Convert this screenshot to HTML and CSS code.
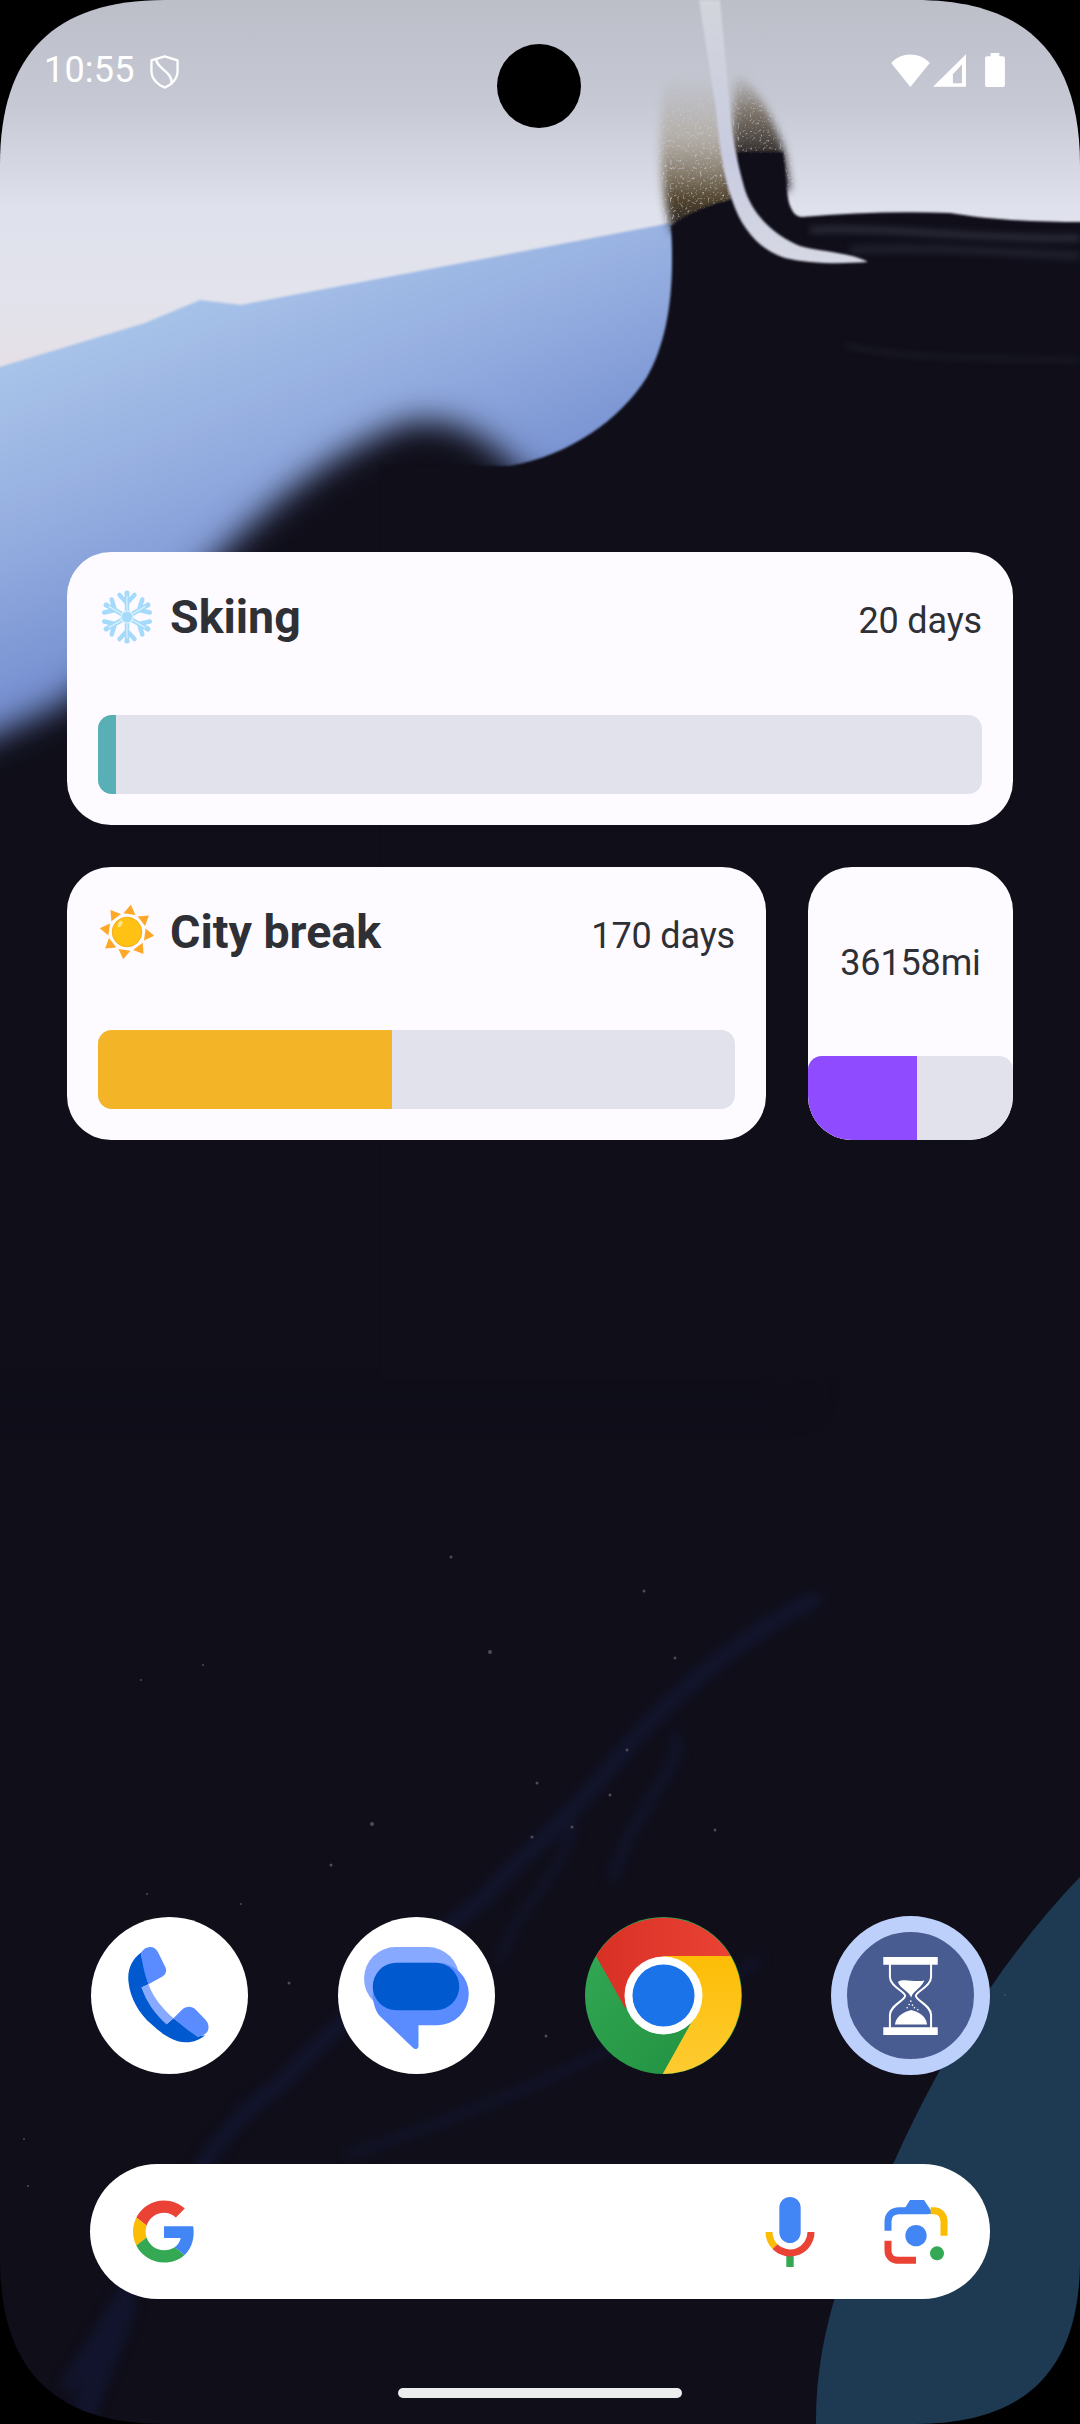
FILE: index.html
```html
<!DOCTYPE html>
<html lang="en">
<head>
<meta charset="utf-8">
<title>Home screen</title>
<link rel="stylesheet" href="styles.css">
</head>
<body>
<main class="screen">
  <svg class="wallpaper" viewBox="0 0 1080 2424" aria-hidden="true">
    <defs>
      <linearGradient id="sky" gradientUnits="userSpaceOnUse" x1="0" y1="0" x2="0" y2="380">
        <stop offset="0" stop-color="#bcbfc8"/>
        <stop offset=".27" stop-color="#c6c9d4"/>
        <stop offset=".55" stop-color="#dfe1ec"/>
        <stop offset=".78" stop-color="#e2e3ec"/>
        <stop offset="1" stop-color="#e6dfe5"/>
      </linearGradient>
      <linearGradient id="blue" gradientUnits="userSpaceOnUse" x1="300" y1="250" x2="420" y2="540">
        <stop offset="0" stop-color="#a8c3e9"/>
        <stop offset=".5" stop-color="#94ade0"/>
        <stop offset="1" stop-color="#7690d1"/>
      </linearGradient>
      <linearGradient id="brown" x1="0" y1="0" x2="0" y2="1">
        <stop offset="0" stop-color="#a09480" stop-opacity="0"/>
        <stop offset=".4" stop-color="#9a8e78" stop-opacity=".55"/>
        <stop offset=".75" stop-color="#54462f"/>
        <stop offset="1" stop-color="#14131a"/>
      </linearGradient>
      <linearGradient id="brownDark" x1="0" y1="0" x2="0" y2="1">
        <stop offset="0" stop-color="#6a5a42" stop-opacity="0"/>
        <stop offset=".35" stop-color="#5a4c38" stop-opacity=".7"/>
        <stop offset=".75" stop-color="#221e20"/>
        <stop offset="1" stop-color="#0f0e19"/>
      </linearGradient>
      <linearGradient id="strip" x1="0" y1="0" x2="0" y2="1">
        <stop offset="0" stop-color="#d3d5dc"/>
        <stop offset=".6" stop-color="#c9cce0"/>
        <stop offset="1" stop-color="#d6d8e4"/>
      </linearGradient>
      <filter id="soft" color-interpolation-filters="sRGB" filterUnits="userSpaceOnUse" x="-100" y="300" width="1000" height="1200"><feGaussianBlur stdDeviation="16"/></filter>
      <filter id="edge" color-interpolation-filters="sRGB" filterUnits="userSpaceOnUse" x="-40" y="-20" width="1160" height="1400"><feGaussianBlur stdDeviation="1"/></filter>
      <filter id="haze" color-interpolation-filters="sRGB" filterUnits="userSpaceOnUse" x="-20" y="-20" width="1120" height="2464"><feGaussianBlur stdDeviation="6"/></filter>
      <filter id="hazeThin" color-interpolation-filters="sRGB" filterUnits="userSpaceOnUse" x="-20" y="-20" width="1120" height="2464"><feGaussianBlur stdDeviation="3"/></filter>
      <filter id="grain" color-interpolation-filters="sRGB" filterUnits="userSpaceOnUse" x="620" y="40" width="220" height="220">
        <feGaussianBlur in="SourceGraphic" stdDeviation="4" result="b"/>
        <feTurbulence type="fractalNoise" baseFrequency=".4" numOctaves="2" seed="4"/>
        <feColorMatrix values="0 0 0 0 0  0 0 0 0 0  0 0 0 0 0  2.600 0 0 0 -.100" result="n"/>
        <feComposite in="b" in2="n" operator="in"/>
      </filter>
    </defs>
    <rect width="1080" height="2424" fill="#0f0e19"/>
    <path d="M0 0H1080V300H720V500H0Z" fill="url(#sky)"/>
    <path d="M-30 376L145 323 200 300 241 305 671 223 720 300 600 820H-30Z" fill="url(#blue)" filter="url(#edge)"/>
    <path d="M530 482C495 440 450 410 400 425 330 455 290 490 250 525 180 590 120 660 60 705L-60 760V1400H800V480Z" fill="#0f0e19" filter="url(#soft)"/>
    <path d="M664 82C690 70 705 72 725 90L745 240 672 232C660 190 658 130 664 82Z" fill="url(#brown)" filter="url(#grain)"/>
    <path d="M735 72C750 78 770 110 784 150L790 190H730Z" fill="url(#brownDark)" filter="url(#grain)"/>
    <path d="M671 226C690 212 710 204 730 200L738 152 783 152C786 170 786 190 789 203 792 212 796 217 802 217 850 213 900 211 950 213 990 220 1040 222 1082 222V1380H380V466H510C570 455 620 420 647 377 668 340 675 290 671 226Z" fill="#0f0e19" filter="url(#edge)"/>
    <path d="M810 230C880 226 980 240 1080 238" stroke="#292b38" stroke-width="7" fill="none" filter="url(#hazeThin)"/>
    <path d="M850 250C930 246 1000 252 1080 256" stroke="#1d1f2b" stroke-width="9" fill="none" filter="url(#hazeThin)"/>
    <path d="M845 345C900 360 1000 358 1080 360" stroke="#20212d" stroke-width="3" fill="none" filter="url(#hazeThin)"/>
    <path d="M699 0L716 110C720 150 724 180 732 200 742 230 760 250 785 258 810 264 840 264 868 262 850 252 820 252 800 246 780 238 755 220 745 190 738 165 732 140 730 110L720 0Z" fill="url(#strip)" filter="url(#edge)"/>

    <path d="M1080 1877C1000 1960 940 2060 895 2160 850 2240 815 2330 816 2424H1080Z" fill="#1e3a53"/>
    <g fill="none" stroke="#151a3c" stroke-linecap="round" filter="url(#haze)" opacity=".6">
      <path d="M813 1600C758 1627 689 1677 627 1747 572 1818 523 1854 482 1900 427 1942 344 2018 275 2089 207 2125 124 2307 69 2384" stroke-width="16"/>
      <path d="M675 1736C689 1759 634 1806 613 1877" stroke-width="10"/>
      <path d="M758 1960C650 2040 510 2100 351 2154" stroke-width="8"/>
      <path d="M572 1827C560 1880 520 1900 500 1960" stroke-width="8"/>
      <path d="M124 2307C110 2350 90 2390 80 2424" stroke-width="24"/>
    </g>
    <g fill="#4d4d57">
      <circle cx="490" cy="1652" r="2"/><circle cx="372" cy="1824" r="2"/><circle cx="451" cy="1557" r="1.500"/>
      <circle cx="644" cy="1591" r="1.500"/><circle cx="675" cy="1658" r="1.500"/><circle cx="532" cy="1837" r="1.500"/>
      <circle cx="331" cy="1865" r="1.500"/><circle cx="546" cy="2036" r="1.500"/><circle cx="715" cy="1830" r="1.500"/>
      <circle cx="572" cy="1827" r="1.500"/><circle cx="610" cy="1795" r="1.500"/><circle cx="537" cy="1783" r="1.500"/>
      <circle cx="627" cy="1750" r="1.500"/><circle cx="203" cy="1665" r="1"/><circle cx="141" cy="1680" r="1"/>
      <circle cx="241" cy="1904" r="1"/><circle cx="147" cy="1894" r="1"/><circle cx="289" cy="1983" r="1.500"/>
      <circle cx="24" cy="2139" r="1"/><circle cx="28" cy="2186" r="1"/><circle cx="1005" cy="1995" r="1"/>
    </g>
  </svg>

  <div class="camera"></div>

  <header class="status">
    <div class="status-group">
      <span class="clock">10:55</span>
      <svg class="ic-shield" viewBox="453 165 87 103"><path d="M497 169L536 181V214C536 238 516 256 497 264 478 256 457 238 457 214V181Z" fill="none" stroke="#fff" stroke-width="7" stroke-linejoin="round"/><path d="M472 176C468 205 522 212 518 254" fill="none" stroke="#fff" stroke-width="7"/></svg>
    </div>
    <div class="status-group">
      <svg class="ic-wifi" viewBox="93 100 117 100"><path d="M93 127C125 93 178 93 210 127L151 200Z" fill="#fff"/></svg>
      <svg class="ic-signal" viewBox="220 103 98 97"><path d="M318 103V200H220ZM306 134V189H279V163Z" fill="#fff" fill-rule="evenodd"/></svg>
      <svg class="ic-battery" viewBox="375 100 60 103"><path d="M392 100H418V110H429A6 6 0 0 1 435 116V197A6 6 0 0 1 429 203H381A6 6 0 0 1 375 197V116A6 6 0 0 1 381 110H392Z" fill="#fff"/></svg>
    </div>
  </header>

  <section class="widgets">
    <article class="card">
      <div class="head">
        <svg class="emoji" viewBox="-29 -29 58 58">
          <defs>
            <g id="arm" fill="none" stroke-linecap="round" stroke-linejoin="round">
              <path d="M0-6V-23M-7.500-22L0-14 7.500-22" stroke="#a5dafa" stroke-width="4.500"/>
              <path d="M0-7V-21" stroke="#e3f4fe" stroke-width="1"/>
              <circle cy="-24" r="2.600" fill="#a5dafa"/>
            </g>
          </defs>
          <use href="#arm"/><use href="#arm" transform="rotate(60)"/><use href="#arm" transform="rotate(120)"/>
          <use href="#arm" transform="rotate(180)"/><use href="#arm" transform="rotate(240)"/><use href="#arm" transform="rotate(300)"/>
          <circle r="6" fill="#a5dafa" stroke="#d8f0fe" stroke-width="1.500"/>
        </svg>
        <h2 class="title">Skiing</h2>
        <span class="value">20 days</span>
      </div>
      <div class="track"><div class="fill fill-teal" style="width:18px"></div></div>
    </article>

    <div class="row">
      <article class="card card-wide">
        <div class="head">
          <svg class="emoji" viewBox="-29 -29 58 58">
            <defs><path id="ray" d="M-6-18L0-27.500 6-18Z" fill="#ffa726"/></defs>
            <g transform="rotate(8)">
              <use href="#ray"/><use href="#ray" transform="rotate(45)"/><use href="#ray" transform="rotate(90)"/><use href="#ray" transform="rotate(135)"/>
              <use href="#ray" transform="rotate(180)"/><use href="#ray" transform="rotate(225)"/><use href="#ray" transform="rotate(270)"/><use href="#ray" transform="rotate(315)"/>
            </g>
            <circle r="16" fill="#fff"/>
            <circle r="14.800" fill="#ffc114" stroke="#fbab19" stroke-width="1"/>
            <ellipse cx="-7" cy="-8" rx="2" ry="3.500" transform="rotate(30 -7 -8)" fill="#ffe28a"/>
          </svg>
          <h2 class="title">City break</h2>
          <span class="value">170 days</span>
        </div>
        <div class="track"><div class="fill fill-amber" style="width:294px"></div></div>
      </article>

      <article class="card-mini">
        <div class="mini-label"><span class="value">36158mi</span></div>
        <div class="track track-mini"><div class="fill fill-purple" style="width:109px"></div></div>
      </article>
    </div>
  </section>

  <nav class="dock">
    <div class="app app-white">
      <svg class="app-art" viewBox="63 48 470 470">
        <path d="M212 155C185 175 172 205 175 240 180 290 205 335 245 370 275 398 310 423 345 423 368 424 390 415 405 402L382 406 310 351 289 369 214 259 235 249Z" fill="#0059cf"/>
        <path d="M212 155C220 145 228 138 240 138 250 138 258 143 263 152L285 197C291 209 287 220 277 226L235 249C225 225 217 190 212 155Z" fill="#5a8cff"/>
        <path d="M214 259L235 249C250 290 280 325 310 351L289 369C255 340 228 300 214 259Z" fill="#87a9ff"/>
        <path d="M310 351L336 325C348 314 365 314 376 325L405 355C416 366 418 382 410 393 403 401 392 406 382 406 355 390 332 370 310 351Z" fill="#5a8cff"/>
      </svg>
    </div>
    <div class="app app-white">
      <svg class="app-art" viewBox="804 48 470 470">
        <rect x="882" y="138" width="285" height="189" rx="94" fill="#87a9ff"/>
        <path d="M1001 185H1102A93 93 0 0 1 1102 372H1045V435C1045 444 1034 446 1029 440L930 345C917 333 908 305 908 278A93 93 0 0 1 1001 185Z" fill="#5a8cff"/>
        <rect x="908" y="185" width="259" height="142" rx="71" fill="#0059cf"/>
      </svg>
    </div>
    <div class="app">
      <svg class="app-art" viewBox="0 0 157 157">
        <defs>
          <linearGradient id="cg" x1="0" y1="0" x2="1" y2="1"><stop offset="0" stop-color="#35aa55"/><stop offset="1" stop-color="#1e8e3e"/></linearGradient>
          <linearGradient id="cy" x1="0" y1="0" x2="0" y2="1"><stop offset="0" stop-color="#fdbd06"/><stop offset="1" stop-color="#fdcb32"/></linearGradient>
          <linearGradient id="cr" x1="0" y1="0" x2="1" y2="0"><stop offset="0" stop-color="#d93025"/><stop offset="1" stop-color="#ea4335"/></linearGradient>
        </defs>
        <circle cx="78.500" cy="78.500" r="78.500" fill="url(#cg)"/>
        <path d="M11 39A78.500 78.500 0 0 1 145.700 39H78.500V78.500L40 90.700Z" fill="url(#cr)"/>
        <path d="M78.500 39H145.700A78.500 78.500 0 0 1 77.700 157L110 99 78.500 78.500Z" fill="url(#cy)"/>
        <circle cx="78.500" cy="78.500" r="39" fill="#fff"/>
        <circle cx="78.500" cy="78.500" r="31" fill="#1a73e8"/>
      </svg>
    </div>
    <div class="app app-timer">
      <svg class="timer-art" viewBox="968 165 164 235">
        <path d="M968 165H1132V188H968ZM968 377H1132V400H968Z" fill="#fff"/>
        <path d="M988 186V225C988 255 1034 268 1034 282 1034 296 988 310 988 340V380M1112 186V225C1112 255 1066 268 1066 282 1066 296 1112 310 1112 340V380" fill="none" stroke="#fff" stroke-width="6"/>
        <path d="M1012 240C1030 228 1060 242 1092 236 1080 262 1056 268 1052 288 1048 268 1020 262 1012 240ZM1003 368C1008 340 1035 330 1052 325 1070 330 1096 340 1100 368Z" fill="#fff"/>
        <g fill="#fff"><circle cx="1051" cy="298" r="2.500"/><circle cx="1046" cy="308" r="2.500"/><circle cx="1056" cy="310" r="2.500"/><circle cx="1040" cy="318" r="2.500"/><circle cx="1062" cy="318" r="2.500"/><circle cx="1072" cy="324" r="2.500"/></g>
      </svg>
    </div>
  </nav>

  <div class="search">
    <svg class="ic-g" viewBox="0 0 48 48">
      <path fill="#EA4335" d="M24 9.500c3.540 0 6.710 1.220 9.210 3.600l6.850-6.850C35.900 2.380 30.470 0 24 0 14.620 0 6.510 5.380 2.560 13.220l7.980 6.190C12.430 13.720 17.740 9.500 24 9.500z"/>
      <path fill="#4285F4" d="M46.980 24.550c0-1.570-.15-3.090-.38-4.550H24v9.020h12.940c-.58 2.960-2.260 5.480-4.780 7.180l7.730 6c4.510-4.180 7.090-10.360 7.090-17.650z"/>
      <path fill="#FBBC05" d="M10.530 28.590c-.48-1.450-.76-2.990-.76-4.590s.27-3.140.76-4.590l-7.980-6.190C.92 16.460 0 20.120 0 24c0 3.880.92 7.540 2.560 10.780l7.970-6.190z"/>
      <path fill="#34A853" d="M24 48c6.480 0 11.930-2.130 15.890-5.810l-7.730-6c-2.150 1.450-4.920 2.300-8.160 2.300-6.260 0-11.570-4.220-13.470-9.910l-7.980 6.190C6.510 42.620 14.620 48 24 48z"/>
    </svg>
    <svg class="ic-mic" viewBox="76 80 148 210">
      <rect x="118" y="80" width="64" height="138" rx="32" fill="#4285f4"/>
      <rect x="139" y="256" width="22" height="34" fill="#34a853"/>
      <path d="M87 185A63 63 0 0 0 105 229" fill="none" stroke="#fbbc04" stroke-width="21"/>
      <path d="M105 229A63 63 0 0 0 213 185" fill="none" stroke="#ea4335" stroke-width="21"/>
    </svg>
    <svg class="ic-lens" viewBox="433 88 190 192">
      <path d="M444 180V152C444 132 458 120 478 120H565" fill="none" stroke="#4285f4" stroke-width="21"/>
      <path d="M495 112L510 88H552L580 130H495Z" fill="#4285f4"/>
      <path d="M572 120H582C600 120 612 134 612 152V195" fill="none" stroke="#fbbc04" stroke-width="21"/>
      <path d="M444 210V240C444 258 458 269 476 269H528" fill="none" stroke="#ea4335" stroke-width="21"/>
      <circle cx="528" cy="195" r="32" fill="#4285f4"/>
      <circle cx="591" cy="248" r="21" fill="#34a853"/>
    </svg>
  </div>

  <div class="handle"></div>
</main>
</body>
</html>
```

FILE: styles.css
```css
* { box-sizing: border-box; }

html, body {
  margin: 0;
  background: #000;
}

.screen {
  position: relative;
  width: 1080px;
  height: 2424px;
  clip-path: path("M0 165C0 54 54 0 165 0H915C1026 0 1080 54 1080 165V2259C1080 2370 1026 2424 915 2424H165C54 2424 0 2370 0 2259Z");
  overflow: hidden;
  display: flex;
  flex-direction: column;
  padding-bottom: 26px;
  font-family: Roboto, "Liberation Sans", sans-serif;
  color: #2e3036;
}

.wallpaper {
  position: absolute;
  inset: 0;
  width: 100%;
  height: 100%;
  display: block;
}

.camera {
  position: absolute;
  left: 497px;
  top: 44px;
  width: 84px;
  height: 84px;
  border-radius: 50%;
  background: #000;
}

.status {
  position: relative;
  height: 140px;
  flex: none;
  padding: 0 75px 0 44px;
  display: flex;
  justify-content: space-between;
  align-items: center;
}

.status-group {
  display: flex;
  align-items: center;
}

.clock {
  font-size: 36px;
  letter-spacing: .2px;
  color: #fff;
  line-height: 40px;
}

.ic-shield { width: 29px; height: 34px; margin-left: 15px; margin-top: 4px; }
.ic-wifi { width: 39px; height: 33px; }
.ic-signal { width: 33px; height: 33px; margin-left: 3px; }
.ic-battery { width: 20px; height: 34px; margin-left: 19px; }

.widgets {
  position: relative;
  flex: none;
  margin-top: 412px;
  padding: 0 67px;
  display: flex;
  flex-direction: column;
  gap: 42px;
}

.row {
  display: flex;
  gap: 42px;
}

.card,
.card-mini {
  height: 273px;
  background: #fdfbff;
  border-radius: 44px;
  overflow: hidden;
}

.card {
  padding: 34px 31px 31px;
  display: flex;
  flex-direction: column;
  justify-content: space-between;
}

.card-wide { width: 699px; }

.card-mini {
  width: 205px;
  display: flex;
  flex-direction: column;
}

.head {
  height: 62px;
  display: flex;
  align-items: baseline;
}

.emoji {
  width: 58px;
  height: 58px;
  flex: none;
  align-self: center;
}

.title {
  margin: 0 0 0 14px;
  padding-top: 4px;
  font-size: 46.500px;
  font-weight: 700;
  line-height: 54px;
}

.value {
  margin-left: auto;
  font-size: 36px;
  letter-spacing: -.15px;
  font-weight: 400;
  line-height: 44px;
}

.mini-label {
  flex: 1;
  padding-top: 2px;
  display: flex;
  align-items: center;
  justify-content: center;
}

.mini-label .value { margin: 0; }

.track {
  height: 79px;
  background: #e1e2ec;
  border-radius: 14px;
  overflow: hidden;
  flex: none;
}

.track-mini {
  height: 84px;
  border-radius: 14px 14px 0 0;
}

.fill { height: 100%; }
.fill-teal { background: #58b0b6; }
.fill-amber { background: #f4b428; }
.fill-purple { background: #8e4bff; }

.dock {
  position: relative;
  margin-top: auto;
  padding-left: 91px;
  display: flex;
  align-items: center;
  gap: 90px;
}

.app {
  width: 157px;
  height: 157px;
  border-radius: 50%;
  flex: none;
}

.app-white { background: #fff; }
.app-art { width: 157px; height: 157px; display: block; }

.app-timer {
  width: 159px;
  height: 159px;
  margin-left: -1px;
  background: #485c92;
  border: 16px solid #bdd0fb;
  display: flex;
  align-items: center;
  justify-content: center;
}

.timer-art { width: 55px; height: 78px; }

.search {
  position: relative;
  height: 135px;
  margin: 89px 90px 0;
  background: #fff;
  border-radius: 68px;
  display: flex;
  align-items: center;
  padding: 0 42px 0 43px;
}

.ic-g { width: 62px; height: 63px; }
.ic-mic { width: 50px; height: 70px; margin-left: auto; }
.ic-lens { width: 64px; height: 64px; margin-left: 69px; }

.handle {
  position: relative;
  width: 284px;
  height: 10px;
  margin: 89px auto 0;
  background: #eceded;
  border-radius: 5px;
}
```
